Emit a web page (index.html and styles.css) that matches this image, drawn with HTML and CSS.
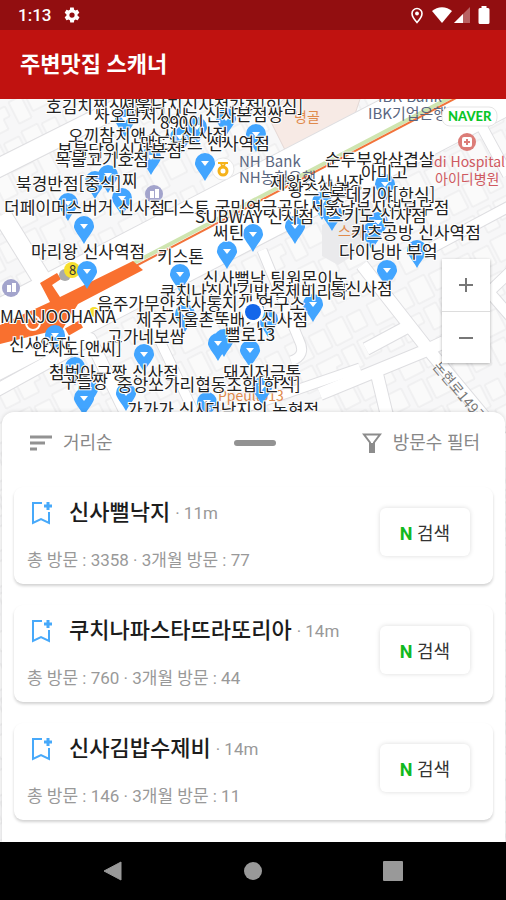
FILE: index.html
```
<!DOCTYPE html>
<html lang="ko">
<head>
	<meta charset="UTF-8">
	<meta name="viewport" content="width=device-width, initial-scale=1">
	<title>주변맛집 스캐너</title>
	<link rel="stylesheet" href="styles.css">
</head>
<body>
	<div class="status-bar">
		<span class="time">1:13</span>
		<svg width="18" height="18" viewBox="0 0 24 24" fill="#fff"><path d="M19.4 13c0-.3.1-.6.1-1s0-.7-.1-1l2.100-1.700c.2-.1.2-.4.100-.6l-2-3.500c-.1-.2-.4-.3-.6-.2l-2.500 1c-.5-.4-1.100-.7-1.700-1l-.4-2.600c0-.2-.2-.4-.5-.4h-4c-.2 0-.4.2-.5.4L9.200 5c-.6.3-1.200.6-1.700 1L5 5c-.2-.1-.5 0-.6.2l-2 3.500c-.1.2-.1.500.1.600L4.600 11c0 .3-.1.700-.1 1s0 .7.100 1l-2.100 1.700c-.2.1-.2.400-.1.600l2 3.500c.1.2.4.300.6.200l2.500-1c.5.4 1.100.7 1.700 1l.4 2.600c0 .2.2.4.5.4h4c.2 0 .5-.2.5-.4l.4-2.600c.6-.3 1.200-.6 1.700-1l2.500 1c.2.1.5 0 .6-.2l2-3.500c.1-.2.1-.5-.1-.6zM12 15.500a3.500 3.500 0 1 1 0-7 3.500 3.500 0 0 1 0 7z"/></svg>
		<svg class="push" width="14" height="18" viewBox="0 0 14 18"><path d="M7 2.500a5 5 0 0 0-5 5c0 3.500 5 9 5 9s5-5.500 5-9a5 5 0 0 0-5-5z" fill="none" stroke="#fff" stroke-width="1.600"/><circle cx="7" cy="7.500" r="1.900" fill="#fff"/></svg>
		<svg class="wifi" width="20" height="16" viewBox="0 0 20 16"><path d="M0 4a15 15 0 0 1 20 0L10 16z" fill="#fff"/></svg>
		<svg width="16" height="16" viewBox="0 0 16 16"><path d="M0 16L16 0v16z" fill="#fff" opacity=".35"/><path d="M0 16L9 7v9z" fill="#fff"/></svg>
		<svg class="battery" width="12" height="18" viewBox="0 0 12 18"><path d="M3.500 0h5v2H10q1.500 0 1.500 1.500v13Q11.500 18 10 18H2Q.5 18 .5 16.500v-13Q.5 2 2 2h1.500z" fill="#fff"/></svg>
	</div>
	<header class="app-bar">
		<h1>주변맛집 스캐너</h1>
	</header>

	<main class="map">
		<svg class="map-canvas" viewBox="0 99 506 743" preserveAspectRatio="xMidYMin slice" aria-hidden="true">
			<defs>
				<pattern id="lots" width="92" height="62" patternUnits="userSpaceOnUse" patternTransform="rotate(-27)">
					<rect width="92" height="62" fill="#f7f7f8"/>
					<g fill="#fafafa" stroke="#e9e9eb">
						<path d="M4 4h22v23H4zM30 6h17v20H30zM51 3h18v24H51zM73 5h15v18H73z"/>
						<path d="M4 33h16v24H4zM24 35h24v11h-7v11H24zM53 33h14v24H53zM71 32h18v20H71z"/>
					</g>
				</pattern>
				<g id="pin">
					<path d="M0 15C-3 9-11-0-10-3a10 10 0 0 1 20 0C11 0 3 9 0 15z" fill="#42a5ff"/>
					<path d="M-4-5h8L0 0z" fill="#fff"/>
				</g>
			</defs>
			<rect y="99" width="506" height="743" fill="url(#lots)"/>
			<path d="M284 99h76l-10 30-65 21-18-36z" fill="#f7eae5" stroke="#e5d9d5"/>
			<path d="M322 225l50-24 8 38-42 26-16-9z" fill="#eaeaec"/>

			<!-- street edges, then the streets -->
			<g fill="none" stroke="#dedee1" stroke-linejoin="round">
				<path d="M-20 349L525 66" stroke-width="75"/>
				<path d="M-10 172L150 92M2 215l57 92" stroke-width="20"/>
				<path d="M-10 394l100-55 40 82" stroke-width="14"/>
				<path d="M262 250l37 90q8 16-8 21M150 320l50 105M180 430l180-62" stroke-width="11"/>
				<path d="M362 265l65 83 83 100M320 394l107-44 17-8M366 349l43-23M376 370l12 50" stroke-width="14"/>
				<path d="M470 105l38 70M420 254l90-48M470 270l40 46M488 293l25-24" stroke-width="12"/>
			</g>
			<g fill="none" stroke="#fff" stroke-linejoin="round">
				<path d="M-20 349L525 66" stroke-width="73"/>
				<path d="M-10 172L150 92M2 215l57 92" stroke-width="18"/>
				<path d="M-10 394l100-55 40 82" stroke-width="12"/>
				<path d="M262 250l37 90q8 16-8 21M150 320l50 105M180 430l180-62" stroke-width="9"/>
				<path d="M362 265l65 83 83 100M320 394l107-44 17-8M366 349l43-23M376 370l12 50" stroke-width="12"/>
				<path d="M470 105l38 70M420 254l90-48M470 270l40 46M488 293l25-24" stroke-width="10"/>
			</g>

			<!-- subway line and station -->
			<path d="M130 265L455 95" stroke="#cfe5b0" stroke-width="4"/>
			<path d="M130 269L460 96" stroke="#f2733a" stroke-width="2"/>
			<path d="M0 325l50-23-10-19 17-10 4 6-9 6 8 12 73-36 10 9-65 34-16 26-10 4V331L0 344z" fill="#f9702f"/>
			<path d="M67 332l14-8" stroke="#f9702f" stroke-width="8"/>
			<circle cx="33" cy="323" r="7" fill="#f9702f" stroke="#fff" stroke-width="2"/>
			<circle cx="65" cy="275" r="6" fill="#aaa"/>
			<circle cx="72" cy="270" r="8" fill="#f7df2e"/>
			<circle cx="94" cy="312" r="5" fill="#f7df2e"/>
			<text class="exit" x="69" y="275">8</text>

			<!-- places of the base map -->
			<g fill="#a3a4cc">
				<circle cx="11" cy="288" r="9"/>
				<circle cx="154" cy="194" r="9"/>
			</g>
			<path d="M7 292v-7h4v7zm5 0v-9h4v9zM150 198v-7h4v7zm5 0v-9h4v9z" fill="#fff"/>
			<circle cx="223" cy="169" r="11" fill="#fff" stroke="#e8e8e8"/>
			<path d="M218 163h10M221 164l2 3 2-3" stroke="#f5b21a" stroke-width="2" fill="none"/>
			<circle cx="223" cy="171" r="4" fill="none" stroke="#f5b21a" stroke-width="3"/>
			<circle cx="467" cy="142" r="9" fill="#dc7d78"/>
			<rect x="462" y="137" width="10" height="10" rx="2" fill="#fff"/>
			<path d="M467 139v6M464 142h6" stroke="#dc7d78" stroke-width="2"/>
			<g class="bank">
				<text x="378" y="102">IBK Bank</text>
				<text x="368" y="119">IBK기업은행</text>
				<text x="239" y="167">NH Bank</text>
				<text x="239" y="183">NH농협은행</text>
			</g>
			<g class="hospital">
				<text x="505" y="167" text-anchor="end">idi Hospital</text>
				<text x="435" y="184">아이디병원</text>
			</g>
			<g class="food">
				<text x="294" y="122">병골</text>
				<text x="338" y="236">스시</text>
				<text x="218" y="401">Ppeullo13</text>
			</g>
			<text class="street" transform="translate(432 367) rotate(50)">논현로149길</text>

			<g>
				<use href="#pin" x="125" y="122"/><use href="#pin" x="226" y="121"/>
				<use href="#pin" x="180" y="140"/><use href="#pin" x="197" y="130"/>
				<use href="#pin" x="256" y="137"/><use href="#pin" x="151" y="160"/>
				<use href="#pin" x="205" y="166"/><use href="#pin" x="108" y="178"/>
				<use href="#pin" x="95" y="184"/><use href="#pin" x="122" y="201"/>
				<use href="#pin" x="68" y="206"/><use href="#pin" x="84" y="229"/>
				<use href="#pin" x="385" y="187"/><use href="#pin" x="322" y="205"/>
				<use href="#pin" x="332" y="216"/><use href="#pin" x="295" y="229"/>
				<use href="#pin" x="253" y="237"/><use href="#pin" x="227" y="254"/>
				<use href="#pin" x="378" y="225"/><use href="#pin" x="372" y="235"/>
				<use href="#pin" x="417" y="253"/><use href="#pin" x="387" y="273"/>
				<use href="#pin" x="87" y="274"/><use href="#pin" x="180" y="277"/>
				<use href="#pin" x="313" y="307"/><use href="#pin" x="268" y="322"/>
				<use href="#pin" x="185" y="317"/><use href="#pin" x="55" y="338"/>
				<use href="#pin" x="224" y="342"/><use href="#pin" x="218" y="346"/>
				<use href="#pin" x="250" y="353"/><use href="#pin" x="144" y="357"/>
				<use href="#pin" x="75" y="370"/><use href="#pin" x="88" y="392"/>
				<use href="#pin" x="84" y="401"/><use href="#pin" x="126" y="396"/>
				<use href="#pin" x="262" y="390"/><use href="#pin" x="207" y="405"/>
			</g>

			<!-- restaurants -->
			<g class="place">
				<text x="46" y="113">호김치찜신당감</text>
				<text x="120" y="112">서울낙지신사점</text>
				<text x="229" y="113">강정[인심]</text>
				<text x="94" y="122">사오담서시사</text>
				<text x="205" y="121">신사본점쌍</text>
				<text x="160" y="129">890이</text>
				<text x="68" y="142">오끼참치앤스시</text>
				<text x="181" y="141">신사점</text>
				<text x="140" y="150">맥도날드 신사역점</text>
				<text x="57" y="157">본불닭의신사본점</text>
				<text x="55" y="166">목불고기호점</text>
				<text x="16" y="190">북경반점[중식]</text>
				<text x="122" y="187">찌</text>
				<text x="4" y="214">더페이머스버거 신사점</text>
				<text x="163" y="214">디스트 국민연금공단서울남부지역부무점</text>
				<text x="195" y="223">SUBWAY 신사점</text>
				<text x="328" y="222">스키노 신사점</text>
				<text x="325" y="166">순두부와삼겹살</text>
				<text x="361" y="179">아미고</text>
				<text x="270" y="189">제왕수산시장</text>
				<text x="288" y="196">왕스삼겹</text>
				<text x="330" y="201">롯데키야[한식]</text>
				<text x="213" y="239">써틴</text>
				<text x="351" y="239">카츠공방 신사역점</text>
				<text x="339" y="258">다이닝바 부엌</text>
				<text x="31" y="258">마리왕 신사역점</text>
				<text x="157" y="263">키스톤</text>
				<text x="203" y="285">신사뻘낙 팀원몬이노</text>
				<text x="160" y="298">쿠치나신사김밥수제비리아</text>
				<text x="330" y="295">통신사점</text>
				<text x="97" y="310">음주가무안찬사동지개 연구소</text>
				<text x="0" y="323">MANJOOHANA</text>
				<text x="136" y="326">제주서울촌뚝배기신사점</text>
				<text x="107" y="343">고가네보쌈</text>
				<text x="225" y="341">뻘로13</text>
				<text x="9" y="351">신사안지</text>
				<text x="32" y="355">안지도[앤씨]</text>
				<text x="49" y="379">첨벙아구짱 신사점</text>
				<text x="61" y="388">구들짱</text>
				<text x="223" y="379">돼지저금통</text>
				<text x="117" y="391">중앙쏘가리협동조합[한식]</text>
				<text x="127" y="416">가가가 신사</text>
				<text x="205" y="416">더낙지의 논현점</text>
			</g>

			<circle cx="253" cy="312" r="11" fill="#fff"/>
			<circle cx="253" cy="312" r="8" fill="#1467ea"/>
			<rect x="442" y="107" width="55" height="19" rx="8" fill="#fff" stroke="#e5e5e5"/>
			<text class="naver" x="448" y="121">NAVER</text>
		</svg>

		<div class="zoom">
			<button type="button" aria-label="확대"><svg width="16" height="16" viewBox="0 0 16 16"><path d="M8 1v14M1 8h14" stroke="#777" stroke-width="2"/></svg></button>
			<button type="button" aria-label="축소"><svg width="16" height="16" viewBox="0 0 16 16"><path d="M1 8h14" stroke="#777" stroke-width="2"/></svg></button>
		</div>

		<section class="sheet">
			<div class="sheet-head">
				<button type="button" class="tool">
					<svg width="22" height="16" viewBox="0 0 22 16"><path d="M0 2h22M0 8h15M0 14h7" stroke="#929292" stroke-width="3"/></svg>
					거리순
				</button>
				<span class="handle"></span>
				<button type="button" class="tool tool-filter">
					<svg width="20" height="20" viewBox="0 0 20 20"><path d="M2 1.500h16l-6 8V19H8V9.500z" fill="none" stroke="#8c8c8c" stroke-width="2"/><path d="M8 10h4v9H8z" fill="#8c8c8c"/></svg>
					방문수 필터
				</button>
			</div>
			<ul class="list">
				<li class="card">
					<div class="info">
						<div class="name-row">
							<button type="button" class="bookmark" aria-label="즐겨찾기"><svg width="22" height="24" viewBox="0 0 22 24"><path d="M11 2H2v20l8-4 8 4V11" fill="none" stroke="#47a9fa" stroke-width="2"/><path d="M17 1v8M13 5h8" stroke="#47a9fa" stroke-width="3"/></svg></button>
							<h2>신사뻘낙지</h2>
							<span class="distance">· 11m</span>
						</div>
						<p class="visits">총 방문 : 3358 · 3개월 방문 : 77</p>
					</div>
					<button type="button" class="search"><b>N</b> 검색</button>
				</li>
				<li class="card">
					<div class="info">
						<div class="name-row">
							<button type="button" class="bookmark" aria-label="즐겨찾기"><svg width="22" height="24" viewBox="0 0 22 24"><path d="M11 2H2v20l8-4 8 4V11" fill="none" stroke="#47a9fa" stroke-width="2"/><path d="M17 1v8M13 5h8" stroke="#47a9fa" stroke-width="3"/></svg></button>
							<h2>쿠치나파스타뜨라또리아</h2>
							<span class="distance">· 14m</span>
						</div>
						<p class="visits">총 방문 : 760 · 3개월 방문 : 44</p>
					</div>
					<button type="button" class="search"><b>N</b> 검색</button>
				</li>
				<li class="card">
					<div class="info">
						<div class="name-row">
							<button type="button" class="bookmark" aria-label="즐겨찾기"><svg width="22" height="24" viewBox="0 0 22 24"><path d="M11 2H2v20l8-4 8 4V11" fill="none" stroke="#47a9fa" stroke-width="2"/><path d="M17 1v8M13 5h8" stroke="#47a9fa" stroke-width="3"/></svg></button>
							<h2>신사김밥수제비</h2>
							<span class="distance">· 14m</span>
						</div>
						<p class="visits">총 방문 : 146 · 3개월 방문 : 11</p>
					</div>
					<button type="button" class="search"><b>N</b> 검색</button>
				</li>
			</ul>
		</section>
	</main>

	<nav class="nav-bar">
		<button type="button" aria-label="뒤로"><svg width="20" height="20" viewBox="0 0 20 20"><path d="M18 1v18L1 10z" fill="#999" stroke="#999" stroke-linejoin="round"/></svg></button>
		<button type="button" aria-label="홈"><svg width="20" height="20" viewBox="0 0 20 20"><circle cx="10" cy="10" r="9" fill="#999"/></svg></button>
		<button type="button" aria-label="최근 앱"><svg width="20" height="20" viewBox="0 0 20 20"><rect width="20" height="20" rx="1" fill="#999"/></svg></button>
	</nav>
</body>
</html>
```

FILE: styles.css
```
* {
	box-sizing: border-box;
}

body {
	margin: 0;
	min-height: 100vh;
	display: flex;
	flex-direction: column;
	font-family: Roboto, "Noto Sans CJK KR", sans-serif;
	background: #fff;
}

button {
	padding: 0;
	border: none;
	background: none;
	font-family: inherit;
	cursor: pointer;
}

svg {
	display: block;
	flex-shrink: 0;
}

h1, h2, p, ul {
	margin: 0;
	padding: 0;
}

/* top bars */
.status-bar {
	display: flex;
	align-items: center;
	height: 30px;
	padding: 0 16px 0 18px;
	background: #920e10;
	color: #fff;
}

.time {
	margin-right: 12px;
	font-size: 17px;
	font-weight: 500;
}

.push {
	margin-left: auto;
}

.wifi {
	margin: 0 2px 0 8px;
}

.battery {
	margin-left: 8px;
}

.app-bar {
	display: flex;
	align-items: center;
	height: 69px;
	padding: 0 20px;
	background: #c01210;
	color: #fff;
}

.app-bar h1 {
	font-size: 22px;
	font-weight: 700;
	line-height: 32px;
}

/* map */
.map {
	position: relative;
	flex: 1;
	display: flex;
	flex-direction: column;
	overflow: hidden;
}

.map-canvas {
	position: absolute;
	top: 0;
	left: 0;
	width: 100%;
	height: 100%;
	font-family: "Noto Sans CJK KR", sans-serif;
}

.place {
	font-size: 17px;
	fill: #222;
	stroke: #fff;
	stroke-width: 2px;
	paint-order: stroke;
}

.bank {
	font-size: 15px;
	fill: #5a6680;
}

.hospital {
	font-size: 14px;
	fill: #cf5960;
}

.food {
	font-size: 14px;
	fill: #e08a4c;
}

.street {
	font-size: 14px;
	fill: #777;
}

.exit {
	font-size: 13px;
	fill: #333;
}

.naver {
	font-family: Lato, sans-serif;
	font-size: 13px;
	font-weight: 900;
	fill: #0ac628;
}

.zoom {
	position: absolute;
	top: 160px;
	right: 16px;
	display: flex;
	flex-direction: column;
	width: 48px;
	background: #fff;
	box-shadow: 0 1px 3px rgba(0, 0, 0, 0.3);
}

.zoom button {
	display: flex;
	align-items: center;
	justify-content: center;
	height: 52px;
}

.zoom button + button {
	border-top: 1px solid #ddd;
}

/* bottom sheet */
.sheet {
	position: relative;
	flex: 1;
	margin: 313px 1px 0 2px;
	padding: 19px 12px 22px;
	border-radius: 12px 12px 0 0;
	background: #fff;
	box-shadow: 0 0 4px rgba(0, 0, 0, 0.15);
}

.sheet-head {
	display: grid;
	grid-template-columns: 1fr auto 1fr;
	align-items: center;
	padding: 0 13px 0 16px;
	margin-bottom: 32px;
}

.tool {
	display: flex;
	align-items: center;
	gap: 11px;
	font-size: 18px;
	line-height: 24px;
	color: #888;
}

.tool-filter {
	justify-self: end;
}

.handle {
	width: 42px;
	height: 6px;
	border-radius: 3px;
	background: #929292;
}

.list {
	display: flex;
	flex-direction: column;
	gap: 21px;
	list-style: none;
}

.card {
	display: flex;
	align-items: flex-start;
	justify-content: space-between;
	padding: 14px 23px 12px 13px;
	border-radius: 9px;
	background: #fff;
	box-shadow: 0 2px 3px rgba(0, 0, 0, 0.18);
}

.name-row {
	display: flex;
	align-items: center;
	height: 24px;
	margin-bottom: 23px;
}

.bookmark {
	margin: 0 16px 0 4px;
}

.name-row h2 {
	font-size: 22px;
	font-weight: 500;
	line-height: 24px;
	color: #1c1c1c;
}

.distance {
	margin-left: 5px;
	font-size: 17px;
	color: #999;
}

.visits {
	font-size: 17px;
	line-height: 24px;
	color: #999;
}

.search {
	width: 90px;
	height: 48px;
	margin-top: 7px;
	border-radius: 6px;
	font-size: 18px;
	color: #333;
	box-shadow: 0 0 5px rgba(0, 0, 0, 0.14);
}

.search b {
	color: #12b91e;
}

/* system navigation */
.nav-bar {
	display: flex;
	align-items: center;
	justify-content: center;
	gap: 120px;
	height: 58px;
	background: #000;
}
```
